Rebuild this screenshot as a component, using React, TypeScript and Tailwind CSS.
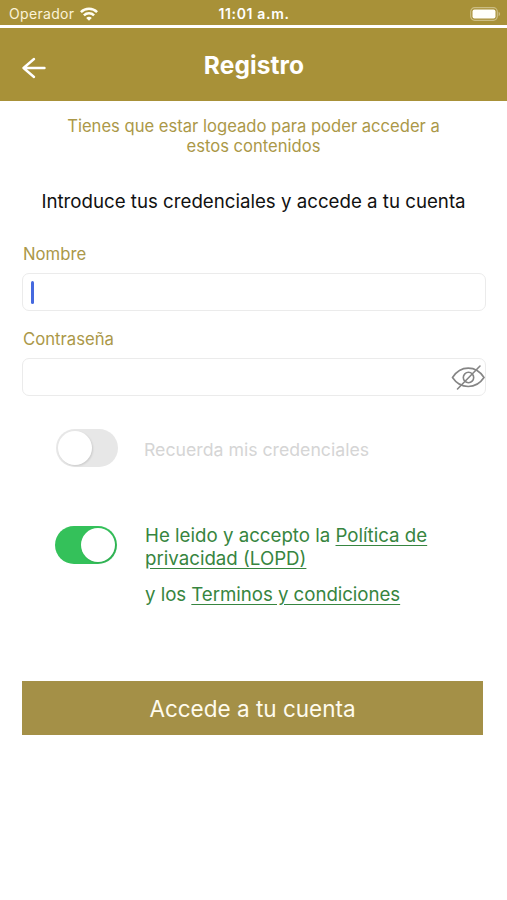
import type { ReactNode } from "react";

function StatusBar() {
  return (
    <div className="grid h-[25px] grid-cols-3 items-center bg-[#a89138] pr-[6px] pl-[9px] text-white">
      <div className="flex items-center gap-[6px] pt-[3px]">
        <span className="text-[14px] leading-[20px] tracking-[0.32px] text-[#fbf3d8]">Operador</span>
        <svg width="18" height="14" viewBox="0 0 18 14" fill="none" stroke="#fffdf2" strokeWidth="2.5">
          <path d="M.9 5.2C5.4.7 12.6.7 17.1 5.2" />
          <path d="M3.9 8.3c2.8-2.8 7.4-2.8 10.2 0" />
          <path d="M9 13.7 6.2 10.9c1.5-1.5 4.1-1.5 5.6 0z" fill="#fffdf2" stroke="none" />
        </svg>
      </div>
      <div className="pt-[3px] pr-[2px] text-center text-[14px] leading-[20px] font-semibold tracking-[0.65px] whitespace-nowrap">11:01 a.m.</div>
      <div className="flex justify-end pt-[2px]">
        <svg width="31" height="14" viewBox="0 0 31 14">
          <rect x=".7" y=".7" width="26.6" height="12.6" rx="4" fill="none" stroke="#cbbd83" strokeWidth="1.2" />
          <rect x="2.5" y="2.5" width="23" height="9" rx="2" fill="#fffffa" />
          <path d="M28.6 4.8c2 .8 2 3.6 0 4.4z" fill="#cbbd83" />
        </svg>
      </div>
    </div>
  );
}

function Header() {
  return (
    <header className="mt-[3px] grid h-[73px] grid-cols-[60px_1fr_60px] items-center bg-[#a89138] text-white">
      <svg className="mt-[7px] ml-[21px]" width="26" height="22" viewBox="0 0 26 22" fill="none" stroke="currentColor" strokeWidth="2.4" strokeLinecap="round" strokeLinejoin="round">
        <path d="M23.5 11H2.5M13 2 2.5 11 13 20" />
      </svg>
      <h1 className="pl-px text-center text-[24.500px] leading-[30px] font-bold tracking-[0.1px]">Registro</h1>
    </header>
  );
}

function Field({ label, children }: { label: string; children?: ReactNode }) {
  return (
    <div>
      <div className="pl-px text-[16.700px] leading-[20px] text-[#ab9848]">{label}</div>
      <div className="mt-[9px] flex h-[38px] items-center rounded-[7px] border border-[#ebebeb] bg-white">{children}</div>
    </div>
  );
}

function EyeOff() {
  return (
    <svg className="ml-auto" width="34" height="28" viewBox="0 0 34 28" fill="none" stroke="#858585" strokeWidth="1.6" strokeLinecap="round">
      <path d="M1.500 14.500C9.500 2 25 2 33 14.500 25 26.500 9.500 26.500 1.500 14.500z" />
      <circle cx="17.500" cy="14.500" r="5.200" />
      <path d="M29 3 6.500 26" />
    </svg>
  );
}

function Switch({ on }: { on: boolean }) {
  return (
    <div className={on ? "flex h-[38px] w-[62px] justify-end rounded-full bg-[#34c15a] p-[2px]" : "flex h-[38px] w-[62px] rounded-full bg-[#e7e7e7] p-[2px]"}>
      <div className="size-[34px] rounded-full bg-white shadow-[1px_1px_2px_rgba(0,0,0,0.12)]" />
    </div>
  );
}

export default function App() {
  return (
    <main className="flex h-[900px] w-[507px] flex-col overflow-hidden bg-white font-['Inter','Liberation_Sans',sans-serif]">
      <StatusBar />
      <Header />
      <p className="mt-[15px] text-center text-[16.600px] leading-[20px] text-[#ab9848]">
        Tienes que estar logeado para poder acceder a<br />estos contenidos
      </p>
      <p className="mt-[34px] text-center text-[18.700px] leading-[24px] whitespace-nowrap text-[#111]">
        Introduce tus credenciales y accede a tu cuenta
      </p>
      <div className="mt-[30px] mr-[21px] ml-[22px] flex flex-col gap-[18px]">
        <Field label="Nombre">
          <span className="ml-[8px] h-[23px] w-[3px] rounded-full bg-[#4569df]" />
        </Field>
        <Field label="Contraseña">
          <EyeOff />
        </Field>
      </div>
      <div className="mt-[33px] ml-[56px] flex items-center gap-[26px]">
        <Switch on={false} />
        <span className="pt-[4px] text-[17.700px] leading-[24px] text-[#d5d5d5]">Recuerda mis credenciales</span>
      </div>
      <div className="mt-[57px] ml-[55px] flex gap-[28px] whitespace-nowrap text-[#378540]">
        <div className="pt-[2px]"><Switch on /></div>
        <div className="text-[18.700px] leading-[23px]">
          <p>He leido y accepto la <span className="underline underline-offset-[3px]">Política de</span><br />
            <span className="underline underline-offset-[3px]">privacidad (LOPD)</span></p>
          <p className="mt-[13px] tracking-[-0.05px]">y los <span className="underline underline-offset-[3px]">Terminos y condiciones</span></p>
        </div>
      </div>
      <button className="mt-[75px] ml-[22px] h-[54px] w-[461px] bg-[#a49047] pt-[2px] text-center text-[22.500px] leading-[28px] text-[#fffbed]">
        Accede a tu cuenta
      </button>
    </main>
  );
}
